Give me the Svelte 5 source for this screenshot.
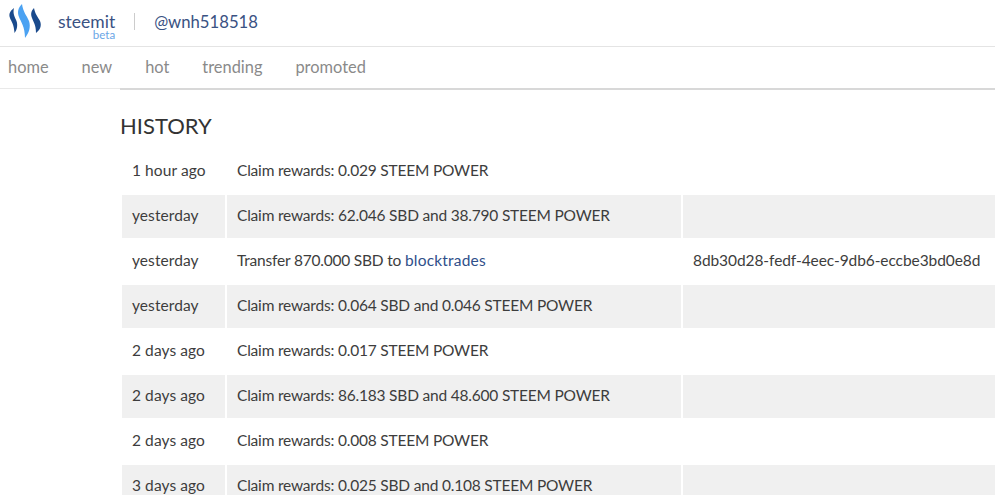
<script>
  const navItems = ['home', 'new', 'hot', 'trending', 'promoted'];

  const history = [
    { when: '1 hour ago', text: 'Claim rewards: 0.029 STEEM POWER' },
    { when: 'yesterday', text: 'Claim rewards: 62.046 SBD and 38.790 STEEM POWER' },
    {
      when: 'yesterday',
      text: 'Transfer 870.000 SBD to ',
      link: 'blocktrades',
      memo: '8db30d28-fedf-4eec-9db6-eccbe3bd0e8d'
    },
    { when: 'yesterday', text: 'Claim rewards: 0.064 SBD and 0.046 STEEM POWER' },
    { when: '2 days ago', text: 'Claim rewards: 0.017 STEEM POWER' },
    { when: '2 days ago', text: 'Claim rewards: 86.183 SBD and 48.600 STEEM POWER' },
    { when: '2 days ago', text: 'Claim rewards: 0.008 STEEM POWER' },
    { when: '3 days ago', text: 'Claim rewards: 0.025 SBD and 0.108 STEEM POWER' }
  ];
</script>

<div class="page">
  <header class="topbar">
    <svg class="logo" width="34" height="34" viewBox="8 4 34 34">
      <path d="M14 8 C10 11 8.5 14 10 18 C11 21 14 24 14.5 33 C17 30 18 25 16.5 21 C15 17 12.5 14 14 8 Z" fill="#1a4a8c" />
      <path d="M22 4 C18 8 17 12 19 17 C21 22 25 27 25 38 C29 33 31 27 29 21 C27 16 23 12 22 4 Z" fill="#4ba2f2" />
      <path d="M34 8 C31 11 30.5 14 32 18 C33.5 22 36 25 36 33 C40 30 42 26 40 21 C38 17 35 14 34 8 Z" fill="#1a4a8c" />
    </svg>
    <div class="brand">
      <span class="name">steemit</span>
      <span class="beta">beta</span>
    </div>
    <span class="divider"></span>
    <a class="account" href="#top">@wnh518518</a>
  </header>

  <nav class="tabs">
    {#each navItems as item}
      <a href="#top">{item}</a>
    {/each}
  </nav>

  <main class="content">
    <h2>HISTORY</h2>
    <table>
      <tbody>
        {#each history as row}
          <tr>
            <td class="when">{row.when}</td>
            <td class="what">{row.text}{#if row.link}<a href="#top">{row.link}</a>{/if}</td>
            <td class="memo">{row.memo ?? ''}</td>
          </tr>
        {/each}
      </tbody>
    </table>
  </main>
</div>

<style>
  :global(body) {
    margin: 0;
    background: #fff;
    overflow: hidden;
  }

  .page {
    width: 995px;
    height: 495px;
    overflow: hidden;
    font-family: Lato, "Liberation Sans", sans-serif;
    color: #3d3d3d;
    font-size: 15.5px;
  }

  a {
    text-decoration: none;
  }

  .topbar {
    height: 47px;
    padding-bottom: 3px;
    box-sizing: border-box;
    display: flex;
    align-items: center;
    border-bottom: 1px solid #e4e4e4;
  }

  .logo {
    margin: 0 0 1px 8px;
    flex: none;
  }

  .brand {
    position: relative;
    margin-left: 16px;
    color: #3a5283;
    font-size: 17.5px;
    line-height: 14px;
  }

  .beta {
    position: absolute;
    right: 0;
    top: 14px;
    font-size: 11.5px;
    line-height: 12px;
    color: #6aa5e6;
  }

  .divider {
    width: 1px;
    height: 17px;
    background: #ccc;
    margin: 0 19px;
  }

  .account {
    color: #3a5283;
    font-size: 16.7px;
  }

  .tabs {
    height: 42px;
    padding: 0 0 2px 8px;
    box-sizing: border-box;
    display: flex;
    align-items: center;
    gap: 33px;
    border-bottom: 1px solid #e9e9e9;
    position: relative;
  }

  .tabs::after {
    content: "";
    position: absolute;
    left: 120px;
    right: 0;
    bottom: -2px;
    height: 2px;
    background: #d8d8d8;
  }

  .tabs a {
    color: #8a8a8a;
    font-size: 16.4px;
  }

  .content {
    padding-left: 120px;
  }

  h2 {
    margin: 0;
    padding-top: 23px;
    height: 36px;
    font-size: 22px;
    line-height: 28px;
    font-weight: 400;
    color: #333;
    box-sizing: content-box;
  }

  table {
    border-collapse: separate;
    border-spacing: 2px;
    width: 880px;
    table-layout: fixed;
  }

  td {
    height: 43px;
    padding: 0 10px 4px;
    box-sizing: border-box;
    white-space: nowrap;
  }

  .when {
    width: 103px;
    letter-spacing: 0.08px;
  }

  .what {
    width: 454px;
    letter-spacing: -0.2px;
  }

  .what a {
    color: #2f4f8a;
    letter-spacing: 0.2px;
  }

  .memo {
    letter-spacing: -0.08px;
  }

  tr:nth-child(even) td {
    background: #f0f0f0;
  }
</style>
